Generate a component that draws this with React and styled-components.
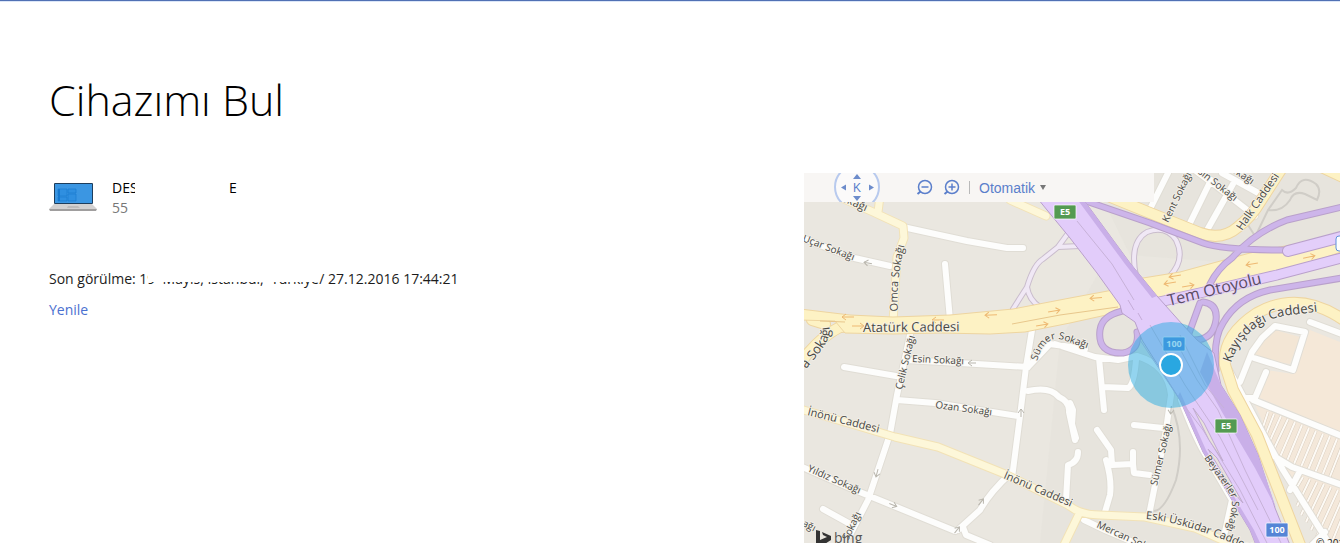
import React from "react";
import styled, { createGlobalStyle } from "styled-components";

const GlobalStyle = createGlobalStyle`
  *, *::before, *::after { box-sizing: border-box; }
  body {
    margin: 0;
    background: #fff;
    color: #1c1c1c;
    font-family: "Open Sans", "Noto Sans", sans-serif;
    font-size: 14px;
    line-height: 20px;
  }
`;

const Page = styled.div`
  min-height: 100vh;
  display: flex;
  flex-direction: column;
  border-top: 1px solid #5171b4;
  overflow: hidden;
`;

const Columns = styled.main`
  flex: 1;
  display: grid;
  grid-template-columns: 3fr 2fr;
  border-top: 1px solid #dbe6f8;
`;

const Details = styled.section`
  padding: 70px 24px 24px 49px;
`;

const Title = styled.h1`
  margin: 0;
  font-size: 43px;
  line-height: 56px;
  font-weight: 300;
  color: #000;
`;

const Device = styled.div`
  display: flex;
  gap: 15px;
  margin-top: 48px;
`;

const Laptop = styled.svg`
  width: 48px;
  height: 40px;
`;

const DeviceName = styled.div`
  display: flex;
  gap: 94px;
  line-height: 24px;
  color: #000;
`;

const NamePart = styled.span`
  width: ${(p) => p.$width}px;
  overflow: hidden;
  white-space: nowrap;
`;

const DeviceModel = styled.div`
  line-height: 16px;
  color: #777;
`;

const LastSeen = styled.p`
  margin: 53px 0 11px;
  display: flex;
  white-space: pre;
`;

const Place = styled.span`
  position: relative;
  width: 180px;

  &::after {
    content: "";
    position: absolute;
    inset: 0 0 7px 9px;
    background: #fff;
  }
`;

const Refresh = styled.a`
  color: #4a70d0;
  text-decoration: none;
`;

const MapColumn = styled.section`
  display: flex;
  padding-top: 171px;
`;

const MapFrame = styled.div`
  position: relative;
  flex: 1;
  min-height: 320px;
  overflow: hidden;
  background: #eae7e0;
`;

const MapCanvas = styled.svg`
  position: absolute;
  inset: 0;
  width: 100%;
  height: 100%;
  font-family: "Open Sans", "Noto Sans", sans-serif;
`;

const Toolbar = styled.div`
  position: absolute;
  top: 0;
  left: 0;
  width: 350px;
  max-width: 100%;
  height: 29px;
  display: flex;
  align-items: center;
  padding-left: 30px;
  background: #f8f6f4;
  color: #5b7fcb;
  overflow: hidden;
`;

const ToolButton = styled.button`
  border: 0;
  padding: 0;
  margin-left: ${(p) => p.$gap || 0}px;
  background: none;
  color: inherit;
  display: flex;
  cursor: pointer;
`;

const Divider = styled.span`
  width: 1px;
  height: 13px;
  margin: 0 9px;
  background: #b9b9b9;
`;

const StyleSelect = styled.select`
  appearance: none;
  border: 0;
  padding: 0;
  width: 60px;
  background: none;
  color: inherit;
  font: 14px/20px "Liberation Sans", Arial, sans-serif;
`;

const HALO = "#f4f1ea";

const ROADS = [
  {
    fill: "#fdfdfc", edge: "#e0ddd5", width: 7,
    paths: [
      "M903 227 L967 241 L1007 248 L1023 248",
      "M800 237 L850 257 L890 266",
      "M945 264 L950 320",
      "M910 335 L897 395 L890 434 L868 500 L850 535",
      "M844 367 L896 376",
      "M897 400 L935 403 L1018 416",
      "M905 360 L960 363 L1028 367",
      "M800 466 L850 488 L955 531",
      "M823 509 L852 525",
      "M1032 330 L1026 367 L1020 416 L1012 478",
      "M1012 472 Q990 492 980 510 L958 530",
      "M963 527 L966 535 L990 545",
      "M1028 367 L1050 344 L1085 349",
      "M1028 391 Q1050 386 1059 397 Q1070 402 1069 412 L1072 426 L1075 440 M1078 452 Q1078 462 1068 465 L1066 500",
      "M1070 403 L1073 410 L1072 424 L1076 438",
      "M1055 344 L1095 357 L1118 360 L1137 356 Q1168 365 1171 395 L1166 430 L1149 515",
      "M1099 358 L1104 410",
      "M1103 387 L1128 388 Q1134 385 1136 360",
      "M1134 425 L1163 428",
      "M1097 430 L1111 450 L1112 465 L1133 464 L1133 452 M1133 464 L1134 473 L1150 475",
      "M1106 460 Q1112 480 1110 495 L1105 512",
      "M1181 400 Q1196 440 1207 457 L1232 500 L1222 545",
      "M1084 520 L1105 530 L1140 545",
      "M1168 173 L1148 213 M1211 180 L1188 227 M1233 184 L1206 232",
      "M1192 168 L1215 185 L1255 216",
      "M1222 173 L1262 195",
      "M1229 370 L1260 428 L1283 470 L1330 545",
      "M1240 382 L1252 352 L1262 338 L1275 326 L1305 332 L1293 370 L1254 358",
      "M1310 322 L1342 334",
      "M1242 398 L1255 398 L1266 372 M1253 400 L1342 436",
      "M1272 455 L1292 467 L1342 485 M1300 471 L1290 490",
      "M1312 545 L1325 532",
    ],
  },
  {
    fill: "#fdf7d9", edge: "#f2e2b6", width: 8,
    paths: [
      "M800 409 L848 423 L895 437 L938 447 L1005 474 L1068 505 Q1080 515 1100 515 L1145 517 L1195 528 L1245 550",
      "M844 199 L873 212 L903 226 L904 238 L897 257 L893 322",
      "M880 196 L878 212",
      "M1078 516 L1064 545",
      "M1010 200 L1046 216",
    ],
  },
  {
    fill: "#fdf2c4", edge: "#eed5a0", width: 11,
    paths: [
      "M1086 187 L1150 213 L1200 233 Q1222 241 1238 227 Q1252 216 1260 202 L1282 168",
      "M798 366 Q818 338 840 327 L870 325",
      "M812 320 L825 324",
      "M1345 321 Q1300 289 1257 313 Q1222 336 1225 365 L1233 390 L1257 435 L1302 550",
      "M1315 164 L1345 178",
    ],
  },
];

const RAMPS = [
  {
    fill: "#f0e8f5", edge: "#c9bccc", width: 5,
    paths: [
      "M1013 309 L1027 287 Q1034 264 1043 259 L1058 247 L1069 232 M1027 287 Q1029 300 1040 307 M1058 247 L1080 246",
      "M1136 276 Q1129 242 1147 232 Q1166 225 1176 240 Q1186 260 1169 277",
    ],
  },
  {
    fill: "#cdb5ea", edge: "#b9a0cb", width: 6,
    paths: [
      "M1080 199 L1150 223 L1203 243 Q1222 250 1285 250",
      "M1210 284 Q1218 268 1232 258 Q1255 232 1287 220 L1342 207",
      "M1216 370 Q1213 338 1223 323 Q1238 297 1270 290 L1342 278",
      "M1128 310 Q1102 314 1100 330 Q1097 354 1123 353 Q1140 350 1137 332",
      "M1200 303 L1188 336 M1203 302 Q1218 304 1216 320 Q1213 341 1192 340",
    ],
  },
];

const LABELS = [
  { d: "M835 198 L885 220", size: 11, text: "Sokağı" },
  { d: "M802 241 L862 264", size: 10, text: "Uçar Sokağı" },
  { d: "M898 311 Q895 280 908 232", size: 11, text: "Omca Sokağı" },
  { d: "M863 332 L985 331", size: 13, text: "Atatürk Caddesi" },
  { d: "M806 369 Q821 352 826 343 Q833 330 827 321 L806 305", size: 13, text: "a Sokağı" },
  { d: "M902 390 L919 320", size: 10, text: "Çelik Sokağı" },
  { d: "M912 362 L980 365", size: 10, text: "Esin Sokağı" },
  { d: "M935 408 L1010 418", size: 10, text: "Ozan Sokağı" },
  { d: "M1037 361 Q1046 332 1066 341 L1106 355", size: 10, text: "Sümer Sokağı" },
  { d: "M807 415 L900 438", size: 11, text: "İnönü Caddesi" },
  { d: "M1003 478 L1085 513", size: 11, text: "İnönü Caddesi" },
  { d: "M807 471 L880 503", size: 10, text: "Yıldız Sokağı" },
  { d: "M848 541 L868 500", size: 10, text: "Sokağı" },
  { d: "M797 523 L824 537", size: 10, text: "kağı" },
  { d: "M1157 486 L1175 410", size: 10, text: "Sümer Sokağı" },
  { d: "M1204 458 L1229 493 Q1237 502 1223 540", size: 10, text: "Beyazerler Sokağı" },
  { d: "M1146 519 Q1190 522 1270 560", size: 11, text: "Eski Üsküdar Caddesi" },
  { d: "M1096 527 L1160 556", size: 10, text: "Mercan Sokağı" },
  { d: "M1168 223 L1196 166", size: 10, text: "Kent Sokağı" },
  { d: "M1190 167 L1240 206", size: 10, text: "Ersin Sokağı" },
  { d: "M1226 168 L1264 193", size: 10, text: "Sokağı" },
  { d: "M1242 231 L1292 158", size: 11, text: "Halk Caddesi" },
  { d: "M1169 306 L1285 278", size: 16, text: "Tem Otoyolu" },
  { d: "M1231 363 C1240 335 1262 318 1290 315 L1340 309", size: 13, text: "Kayışdağı Caddesi" },
];

const ARROWS = [
  [848, 317, 180], [858, 326, 0], [938, 320, 180], [991, 315, 177], [1054, 311, -10],
  [1042, 325, -10], [1096, 298, 175], [1175, 276, 170], [1170, 283, 170], [1188, 286, -10],
  [1252, 264, 170], [1309, 257, -12],
];

const SMALL_ARROWS = [
  [868, 263, 190], [972, 363, 180], [1021, 413, -90], [877, 473, 105], [893, 505, 22],
  [981, 502, -52], [957, 530, -52], [1171, 410, 95],
];

const HATCH = [
  [1268, 412, 1262, 430], [1274, 414, 1265, 437], [1281, 416, 1268, 445], [1288, 419, 1272, 453],
  [1295, 422, 1280, 457], [1302, 425, 1287, 461], [1309, 428, 1294, 464], [1316, 431, 1301, 467],
  [1323, 434, 1308, 470], [1330, 436, 1315, 473], [1337, 439, 1322, 476], [1344, 441, 1329, 479],
  [1303, 477, 1293, 494], [1310, 479, 1297, 506], [1317, 482, 1301, 515], [1324, 484, 1306, 522],
  [1331, 487, 1311, 530], [1338, 490, 1316, 538], [1345, 492, 1322, 545], [1345, 510, 1332, 542],
];

function RoadGroup({ group }) {
  const d = group.paths.join(" ");
  return (
    <g fill="none" strokeLinecap="round" strokeLinejoin="round">
      <path d={d} stroke={group.edge} strokeWidth={group.width + 1} />
      <path d={d} stroke={group.fill} strokeWidth={group.width - 1} />
    </g>
  );
}

function Shield({ x, y, color, children }) {
  return (
    <g>
      <rect x={x - 11} y={y - 7} width="22" height="14" rx="1" fill={color} stroke="#fff" strokeOpacity="0.7" />
      <text x={x} y={y + 3} fontSize="9" fontWeight="700" fill="#fff" textAnchor="middle">{children}</text>
    </g>
  );
}

function Arrow({ at, color, size }) {
  return (
    <path
      transform={`translate(${at[0]} ${at[1]}) rotate(${at[2]})`}
      d={`M${-size} 0 H${size} M${size - 4} -3 L${size} 0 L${size - 4} 3`}
      fill="none"
      stroke={color}
    />
  );
}

function StreetMap() {
  return (
    <MapCanvas viewBox="804 173 536 370" preserveAspectRatio="xMinYMin slice" role="img" aria-label="Harita">
      <path
        d="M1080 200 L1140 290 L1180 400 L1260 543 H1040 L1060 340 L1100 270Z"
        fill="#e4e1da" opacity="0.4"
      />
      <path d="M1090 173 H1340 V235 L1220 262 L1130 255Z" fill="#e5e3db" opacity="0.6" />
      <path d="M1252 345 L1275 330 L1300 337 L1290 364 L1254 358Z" fill="#f3e6d5" />
      <path d="M1310 330 L1340 342 V432 L1255 396 L1266 370 L1293 374Z" fill="#f5e8d8" />
      <path d="M1254 402 L1340 438 V543 H1325 L1277 455Z" fill="#f4e8da" />
      <path
        d="M1255 236 L1248 225 M1256 235 L1268 210 Q1282 212 1290 200 Q1294 190 1305 194 L1317 200 Q1322 190 1316 184 Q1302 174 1296 188 Q1288 196 1282 190 L1268 210 M1171 405 Q1186 440 1176 480 Q1164 512 1153 511"
        fill="none" stroke="#d0cdc7" strokeWidth="2"
      />
      <path d={HATCH.map(([a, b, c, e]) => `M${a} ${b} L${c} ${e}`).join(" ")} stroke="#d8ccbd" strokeWidth="3" />
      <path d={HATCH.map(([a, b, c, e]) => `M${a} ${b} L${c} ${e}`).join(" ")} stroke="#fdfaf5" strokeWidth="2" />

      {ROADS.map((group) => <RoadGroup key={group.fill} group={group} />)}
      <RoadGroup group={RAMPS[0]} />

      <path
        d="M800 309 L850 315 L893 317 L950 315 L1013 309 L1070 298 L1113 290 L1143 278 L1180 272 L1213 263 L1250 253 L1280 247 L1344 234 V251 L1303 265 L1263 275 L1213 286 L1157 300 L1120 312 L1070 323 L1025 332 L990 334 L940 333 L893 334 L845 333 L835 321 L800 320Z"
        fill="#fdf2c4" stroke="#eed5a0"
      />
      <path d="M1012 324 L1060 315 L1118 307 M820 321 L845 322" fill="none" stroke="#e8c78c" />
      {ARROWS.map((at) => <Arrow key={at.join()} at={at} color="#eeb973" size={6} />)}

      <RoadGroup group={RAMPS[1]} />
      <g fill="none" strokeLinejoin="round">
        <path d="M1150 304 L1213 290 L1277 275 L1345 257" stroke="#b9a0cb" strokeWidth="11" />
        <path d="M1150 304 L1213 290 L1277 275 L1345 257" stroke="#e3cefa" strokeWidth="9" />
        <path d="M1288 251 L1345 236" stroke="#b9a0cb" strokeWidth="12" strokeLinecap="round" />
        <path d="M1288 251 L1345 236" stroke="#e3cefa" strokeWidth="10" strokeLinecap="round" />
      </g>
      <path
        d="M1038 199 L1070 238 L1097 273 L1120 305 L1122 313 L1135 322 L1142 340 L1180 400 L1203 452 L1250 530 L1256 545 H1290 L1275 508 L1258 455 L1240 415 L1221 385 L1214 353 L1197 340 L1182 324 L1157 296 L1130 263 L1083 199Z"
        fill="#e2ccfa" stroke="#b9a0cb"
      />
      <path
        d="M1083 199 L1130 263 L1157 296 L1152 298 L1125 264 L1077 199Z M1180 392 L1206 450 L1254 530 L1261 545 H1256 L1250 530 L1203 452 L1178 396Z M1207 352 L1221 385 L1240 415 L1258 455 L1276 508 L1255 468 L1222 412 L1200 372Z"
        fill="#c9afe8"
      />
      <path
        d="M1140 340 L1180 400 L1203 430 L1240 490 L1268 545 M1175 340 L1197 380 L1218 410 L1245 470 L1282 545 M1150 325 L1185 385 L1220 437 L1258 510 M1077 221 L1112 264 L1134 300 M1180 335 L1205 385 L1224 408"
        fill="none" stroke="#c7b2d8"
      />
      <path d="M1193 408 L1204 423 L1223 461 L1209 440Z M1208 449 L1217 458 L1243 503 L1234 493Z" fill="#e7e1dc" stroke="#c0aad0" />
      <path d="M1128 300 L1134 310 M1138 313 L1142 320" stroke="#c5acd8" />

      {SMALL_ARROWS.map((at) => <Arrow key={at.join()} at={at} color="#b9b6ad" size={4} />)}

      {LABELS.map((label, i) => (
        <g key={label.d}>
          <path id={`street-${i}`} d={label.d} fill="none" />
          <text
            fontSize={label.size}
            fill={label.size === 16 ? "#5a4c62" : "#484743"}
            stroke={label.size === 16 ? "#e3cefa" : HALO}
            strokeWidth="2"
            strokeOpacity="0.8"
            paintOrder="stroke"
            strokeLinejoin="round"
          >
            <textPath href={`#street-${i}`}>{label.text}</textPath>
          </text>
        </g>
      ))}

      <Shield x={1065} y={212} color="#549a52">E5</Shield>
      <Shield x={1226} y={426} color="#549a52">E5</Shield>
      <Shield x={1277} y={530} color="#5585d6">100</Shield>
      <Shield x={1174} y={344} color="#4f86dc">100</Shield>
      <rect x="1336" y="236" width="20" height="15" rx="3" fill="#fff" stroke="#5f92dc" strokeWidth="1" />

      <circle cx="1171" cy="365" r="43" fill="#29abe2" fillOpacity="0.5" />
      <circle cx="1171" cy="365" r="11" fill="#29a7e1" stroke="#fff" strokeWidth="2" />

      <path d="M816 530 L820 531 V540 L827 537 L823 535 L822 532 L831 536 V540 L820 547 L816 545Z" fill="#333" />
      <text x="834" y="543" fontSize="14" fill="#555">bing</text>
      <text x="1316" y="547" fontSize="10" fill="#222">© 2016</text>
    </MapCanvas>
  );
}

function ZoomIcon({ plus }) {
  return (
    <svg width="17" height="17" viewBox="0 0 17 17" fill="none" stroke="currentColor">
      <circle cx="9" cy="8" r="6.500" strokeWidth="1.5" />
      <path d="M4.500 12.500 L1.500 15" strokeWidth="2" />
      <path d={plus ? "M5.500 8 H12.500 M9 4.500 V11.500" : "M5.500 8 H12.500"} strokeWidth="1.5" />
    </svg>
  );
}

export default function App() {
  return (
    <>
      <GlobalStyle />
      <Page>
        <Columns>
          <Details>
            <Title>Cihazımı Bul</Title>
            <Device>
              <Laptop viewBox="0 0 48 40" aria-hidden="true">
                <rect x="5" y="7" width="39" height="21" rx="1" fill="#1d3d5c" />
                <rect x="6" y="8" width="37" height="19" fill="#3b96e2" />
                <path d="M9 13 H18 V20 H9Z M19 13 H27 V17 H19Z M9 21 H18 V25 H9Z M19 18 H27 V25 H19Z" fill="#2f8fe0" stroke="#1b7cd0" strokeWidth="0.7" />
                <path d="M9 13 H11 V25 H9Z" fill="#1478d0" />
                <path d="M5 28 H43 L48 33 H0Z" fill="#d3d1d1" />
                <path d="M19 30 H29 L31 32 H18Z" fill="#bdbbbb" />
                <path d="M0 33 H48 L47 35 H1Z" fill="#a09e9e" />
              </Laptop>
              <div>
                <DeviceName>
                  <NamePart $width={23}>DES</NamePart>
                  <NamePart $width={10}>E</NamePart>
                </DeviceName>
                <DeviceModel>55</DeviceModel>
              </div>
            </Device>
            <LastSeen>
              <span>Son görülme: </span>
              <Place>19  Mayıs, İstanbul,  Türkiye</Place>
              <span>/ 27.12.2016 17:44:21</span>
            </LastSeen>
            <Refresh href="#yenile">Yenile</Refresh>
          </Details>
          <MapColumn>
            <MapFrame>
              <StreetMap />
              <Toolbar>
                <ToolButton aria-label="Kuzey">
                  <svg width="46" height="29" viewBox="0 0 46 29">
                    <circle cx="23" cy="14" r="22" fill="#fbfafa" stroke="#b8caee" strokeWidth="2" />
                    <path d="M23 1 L27 6 H19Z M23 28 L19 23 H27Z M7 14.500 L12 11.500 V17.500Z M40 14.500 L35 11.500 V17.500Z" fill="#6d8ccb" />
                    <text x="23" y="19" fontSize="12" textAnchor="middle" fill="#5b7fcb" fontFamily="Liberation Sans, Arial, sans-serif">K</text>
                  </svg>
                </ToolButton>
                <ToolButton $gap={36} aria-label="Uzaklaştır"><ZoomIcon /></ToolButton>
                <ToolButton $gap={10} aria-label="Yakınlaştır"><ZoomIcon plus /></ToolButton>
                <Divider />
                <StyleSelect aria-label="Harita stili" defaultValue="auto">
                  <option value="auto">Otomatik</option>
                </StyleSelect>
                <svg width="8" height="8" viewBox="0 0 8 8" aria-hidden="true">
                  <path d="M1 1 H7 L4 6Z" fill="#777" />
                </svg>
              </Toolbar>
            </MapFrame>
          </MapColumn>
        </Columns>
      </Page>
    </>
  );
}
